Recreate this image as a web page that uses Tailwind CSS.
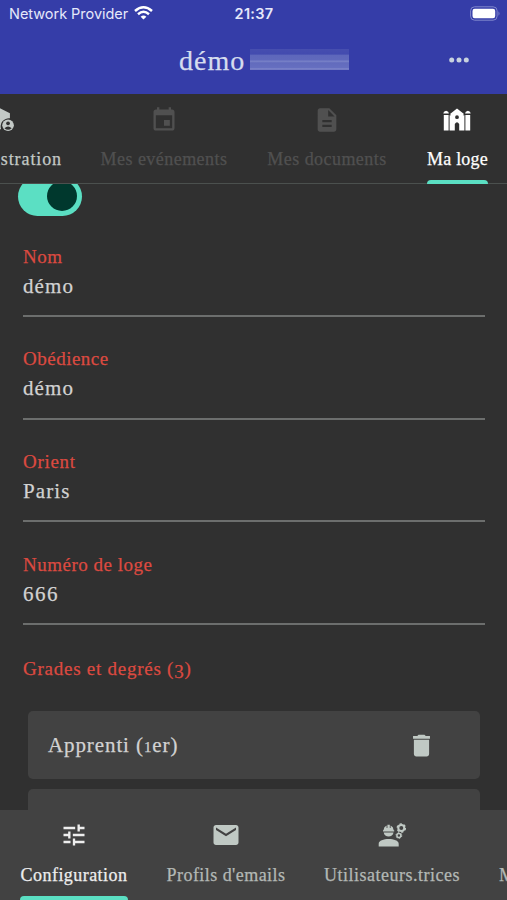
<!DOCTYPE html>
<html lang="fr">
<head>
<meta charset="utf-8">
<title>Ma loge</title>
<script src="https://cdn.jsdelivr.net/npm/@tailwindcss/browser@4"></script>
</head>
<body class="bg-[#303030]">
<div class="w-[507px] h-[900px] overflow-hidden flex flex-col bg-[#303030] text-[#d2d2d2] font-['Liberation_Serif',serif] whitespace-nowrap [-webkit-text-stroke:0.25px_currentColor]">

  <header class="h-[94px] shrink-0 bg-[#353da8] flex flex-col">
    <div class="h-[28px] grid grid-cols-3 items-center pl-[9px] pr-[6px] font-[Inter,sans-serif] text-[#e6e8fa] [-webkit-text-stroke:0]">
      <div class="flex items-center gap-[6px]">
        <span class="text-[14.5px] leading-[28px] tracking-[-0.03px]">Network Provider</span>
        <svg class="w-[19px] h-[14px] shrink-0 mt-[-2px]" viewBox="0 0 19 14" fill="none" stroke="#fff" stroke-width="2.5"><path d="M1 5Q9.500-2.400 18 5M4 8.200Q9.500 3.400 15 8.200"/><path d="M9.500 13.600L6.600 10.700Q9.500 8.300 12.400 10.700Z" fill="#fff" stroke="none"/></svg>
      </div>
      <div class="text-center text-[14.500px] leading-[28px] font-semibold tracking-[0.3px] pr-[2px]">21:37</div>
      <svg class="w-[31px] h-[15px] justify-self-end mt-[-2px]" viewBox="0 0 31 15"><rect x=".6" y=".8" width="26.500" height="13.400" rx="4" fill="none" stroke="#8087cc"/><rect x="2.500" y="2.700" width="22.700" height="9.600" rx="2.200" fill="#fff"/><path d="M28.500 5.200Q30.500 7.500 28.500 9.800Z" fill="#8087cc"/></svg>
    </div>
    <div class="h-[66px] flex items-center pl-[179px] pr-[38px]">
      <div class="w-[71px] mt-[-1px] text-[28px] leading-[36px] tracking-[1px] text-[#d5dcee]">démo</div>
      <div class="w-[99px] h-[21px] mt-[-3px] blur-[0.6px] bg-[linear-gradient(180deg,#464eaf_0,#434baf_24%,#5e67bb_30%,#6069bc_52%,#7a83c8_58%,#626bbd_66%,#666fc0_90%,#8a91cf_96%,#5058b4_100%)]"></div>
      <svg class="w-[20px] h-[6px] ml-auto mt-[-3px]" viewBox="0 0 20 6" fill="#c8d2df"><circle cx="2.700" cy="3" r="2.500"/><circle cx="10" cy="3" r="2.500"/><circle cx="17.300" cy="3" r="2.500"/></svg>
    </div>
  </header>

  <nav class="h-[90px] shrink-0 border-b border-[#4b504e] flex text-[18px] leading-[24px] tracking-[0.45px]">
    <div class="w-[61px] flex flex-col items-end pt-[13px] text-[#c3c9c6]">
      <svg class="w-[28px] h-[28px] mr-[47px] mt-[-1px] overflow-visible" viewBox="0 0 24 24" fill="currentColor"><path d="M12 2L20.500 6.300V10.600A7 7 0 0 0 13 20H3V6.300Z"/><circle cx="18.900" cy="16.500" r="5"/><circle cx="18.900" cy="14.800" r="1.600" fill="#303030"/><path d="M15.800 19Q18.900 16.100 22 19Q18.900 21.800 15.800 19Z" fill="#303030"/></svg>
      <span class="mt-[13px] tracking-[0.9px] mr-[-1px]">Administration</span>
    </div>
    <div class="ml-[39px] w-[128px] flex flex-col items-center pt-[12px] text-[#505050]">
      <svg class="w-[28px] h-[28px]" viewBox="0 0 24 24" fill="currentColor"><path d="M17 12h-5v5h5v-5zM16 1v2H8V1H6v2H5c-1.110 0-1.990.9-1.990 2L3 19c0 1.100.89 2 2 2h14c1.100 0 2-.9 2-2V5c0-1.100-.9-2-2-2h-1V1h-2zm3 18H5V8h14v11z"/></svg>
      <span class="mt-[13px]">Mes evénements</span>
    </div>
    <div class="ml-[39px] w-[120px] flex flex-col items-center pt-[12px] text-[#505050]">
      <svg class="w-[28px] h-[28px]" viewBox="0 0 24 24" fill="currentColor"><path d="M14 2H6c-1.100 0-1.990.9-1.990 2L4 20c0 1.100.89 2 1.990 2H18c1.100 0 2-.9 2-2V8l-6-6zm2 16H8v-2h8v2zm0-4H8v-2h8v2zm-3-5V3.500L18.500 9H13z"/></svg>
      <span class="mt-[13px]">Mes documents</span>
    </div>
    <div class="ml-[40px] w-[61px] flex flex-col items-center pt-[12px] text-white">
      <svg class="w-[28px] h-[28px] mr-[1px]" viewBox="0 0 28 28" fill="currentColor"><path d="M.3 7.500Q.3 5.400 3.100 4.800Q5.900 5.400 5.900 7.500ZM.8 9H5.600V24.500H.8ZM22.100 7.500Q22.100 5.400 24.900 4.800Q27.700 5.400 27.700 7.500ZM22.400 9H27.200V24.500H22.400Z"/><path fill-rule="evenodd" d="M14 2.500L21 8L19.800 9.300H21.400V24.500H16.200V18Q14 14.500 11.800 18V24.500H6.600V9.300H8.200L7 8ZM14 9.300A1.900 1.900 0 1 0 14 13.100A1.900 1.900 0 1 0 14 9.300Z"/></svg>
      <span class="mt-[13px] tracking-[0.2px]">Ma loge</span>
      <div class="mt-auto mb-[-1px] w-[61px] h-[4px] rounded-t-[4px] bg-[#5bdfc3]"></div>
    </div>
  </nav>

  <main class="h-[626px] shrink-0 overflow-hidden px-[23px]">
    <div class="ml-[-5px] mt-[-7px] w-[64px] h-[39px] rounded-full bg-[#5bdfc3] flex items-center justify-end pr-[5px] pb-[2px]"><div class="w-[30px] h-[30px] rounded-full bg-[#00382d]"></div></div>

    <section class="mt-[27px] h-[74px] w-[462px] border-b-2 border-[#6c6e6d]">
      <div class="text-[19px] leading-[28px] tracking-[0.55px] text-[#dc4a40]">Nom</div>
      <div class="text-[21px] leading-[30px] tracking-[1.100px]">démo</div>
    </section>
    <section class="mt-[28px] h-[75px] w-[462px] border-b-2 border-[#6c6e6d]">
      <div class="text-[19px] leading-[28px] tracking-[0.5px] text-[#dc4a40]">Obédience</div>
      <div class="text-[21px] leading-[30px] tracking-[1.100px]">démo</div>
    </section>
    <section class="mt-[28px] h-[74px] w-[462px] border-b-2 border-[#6c6e6d]">
      <div class="text-[19px] leading-[28px] tracking-[0.7px] text-[#dc4a40]">Orient</div>
      <div class="text-[21px] leading-[30px] tracking-[1.100px]">Paris</div>
    </section>
    <section class="mt-[29px] h-[74px] w-[462px] border-b-2 border-[#6c6e6d]">
      <div class="text-[19px] leading-[28px] tracking-[0.5px] text-[#dc4a40]">Numéro de loge</div>
      <div class="text-[21px] leading-[30px] tracking-[1.500px]">666</div>
    </section>

    <h2 class="mt-[29px] text-[19px] leading-[30px] tracking-[0.75px] text-[#dc4a40]">Grades et degrés (<span class="relative top-[3px]">3</span>)</h2>
    <div class="mt-[27px] ml-[5px] w-[452px] h-[68px] rounded-[5px] bg-[#424242] flex items-center justify-between pl-[20px] pr-[44px]">
      <span class="pt-[2px] text-[21px] leading-[30px] tracking-[0.9px]">Apprenti (<span class="text-[15px]">1</span>er)</span>
      <svg class="w-[29px] h-[29px]" viewBox="0 0 24 24" fill="#c0c9c4"><path d="M5.700 19c0 1.100.9 2 2 2h8.600c1.100 0 2-.9 2-2V7.300H5.700v11.700zM19 4.200h-3.500l-1-1.200h-5l-1 1.200H5v2.300h14V4.200z"/></svg>
    </div>
    <div class="mt-[10px] ml-[5px] w-[452px] h-[68px] rounded-[5px] bg-[#424242]"></div>
  </main>

  <nav class="h-[90px] shrink-0 bg-[#424242] flex text-[18px] leading-[24px] tracking-[0.45px] text-[#b3b8b5]">
    <div class="ml-[20px] w-[108px] flex flex-col items-center pt-[11px] text-[#eeeeee]">
      <svg class="w-[28px] h-[28px]" viewBox="0 0 24 24" fill="currentColor"><path d="M3 17v2h6v-2H3zM3 5v2h10V5H3zm10 16v-2h8v-2h-8v-2h-2v6h2zM7 9v2H3v2h4v2h2V9H7zm14 4v-2H11v2h10zm-6-4h2V7h4V5h-4V3h-2v6z"/></svg>
      <span class="mt-[14px]">Configuration</span>
      <div class="mt-auto w-[108px] h-[4px] rounded-t-[4px] bg-[#5bdfc3]"></div>
    </div>
    <div class="ml-[39px] w-[118px] flex flex-col items-center pt-[10px]">
      <svg class="w-[30px] h-[30px]" viewBox="0 0 24 24" fill="#c0c9c4"><path d="M20 4H4c-1.100 0-1.990.9-1.990 2L2 18c0 1.100.9 2 2 2h16c1.100 0 2-.9 2-2V6c0-1.100-.9-2-2-2zm0 4l-8 5-8-5V6l8 5 8-5v2z"/></svg>
      <span class="mt-[13px]">Profils d'emails</span>
    </div>
    <div class="ml-[39px] w-[137px] flex flex-col items-center pt-[11px]">
      <svg class="w-[28px] h-[28px]" viewBox="0 0 28 28" fill="#c0c9c4"><path d="M.7 25.500V22.800C.7 16.500 20.700 16.500 20.700 22.800V25.500ZM5.700 11.500H15.500C15 16.800 6.200 16.800 5.700 11.500ZM5 10.500V9.300H5.500Q5.800 5.800 8.600 4.600V7H9.400V3.800H11.800V7H12.600V4.600Q15.400 5.800 15.700 9.300H16.200V10.500Z"/><circle cx="23.300" cy="7" r="3" fill="none" stroke="#c0c9c4" stroke-width="2"/><circle cx="23.300" cy="7" r="4.100" fill="none" stroke="#c0c9c4" stroke-width="1.400" stroke-dasharray="2.150"/><circle cx="20.900" cy="14.500" r="2" fill="none" stroke="#c0c9c4" stroke-width="1.500"/><circle cx="20.900" cy="14.500" r="2.900" fill="none" stroke="#c0c9c4" stroke-width="1" stroke-dasharray="1.520"/></svg>
      <span class="mt-[14px] tracking-[0.5px]">Utilisateurs.trices</span>
    </div>
    <div class="ml-[39px] pt-[53px]">Mes infos</div>
  </nav>
</div>
</body>
</html>
